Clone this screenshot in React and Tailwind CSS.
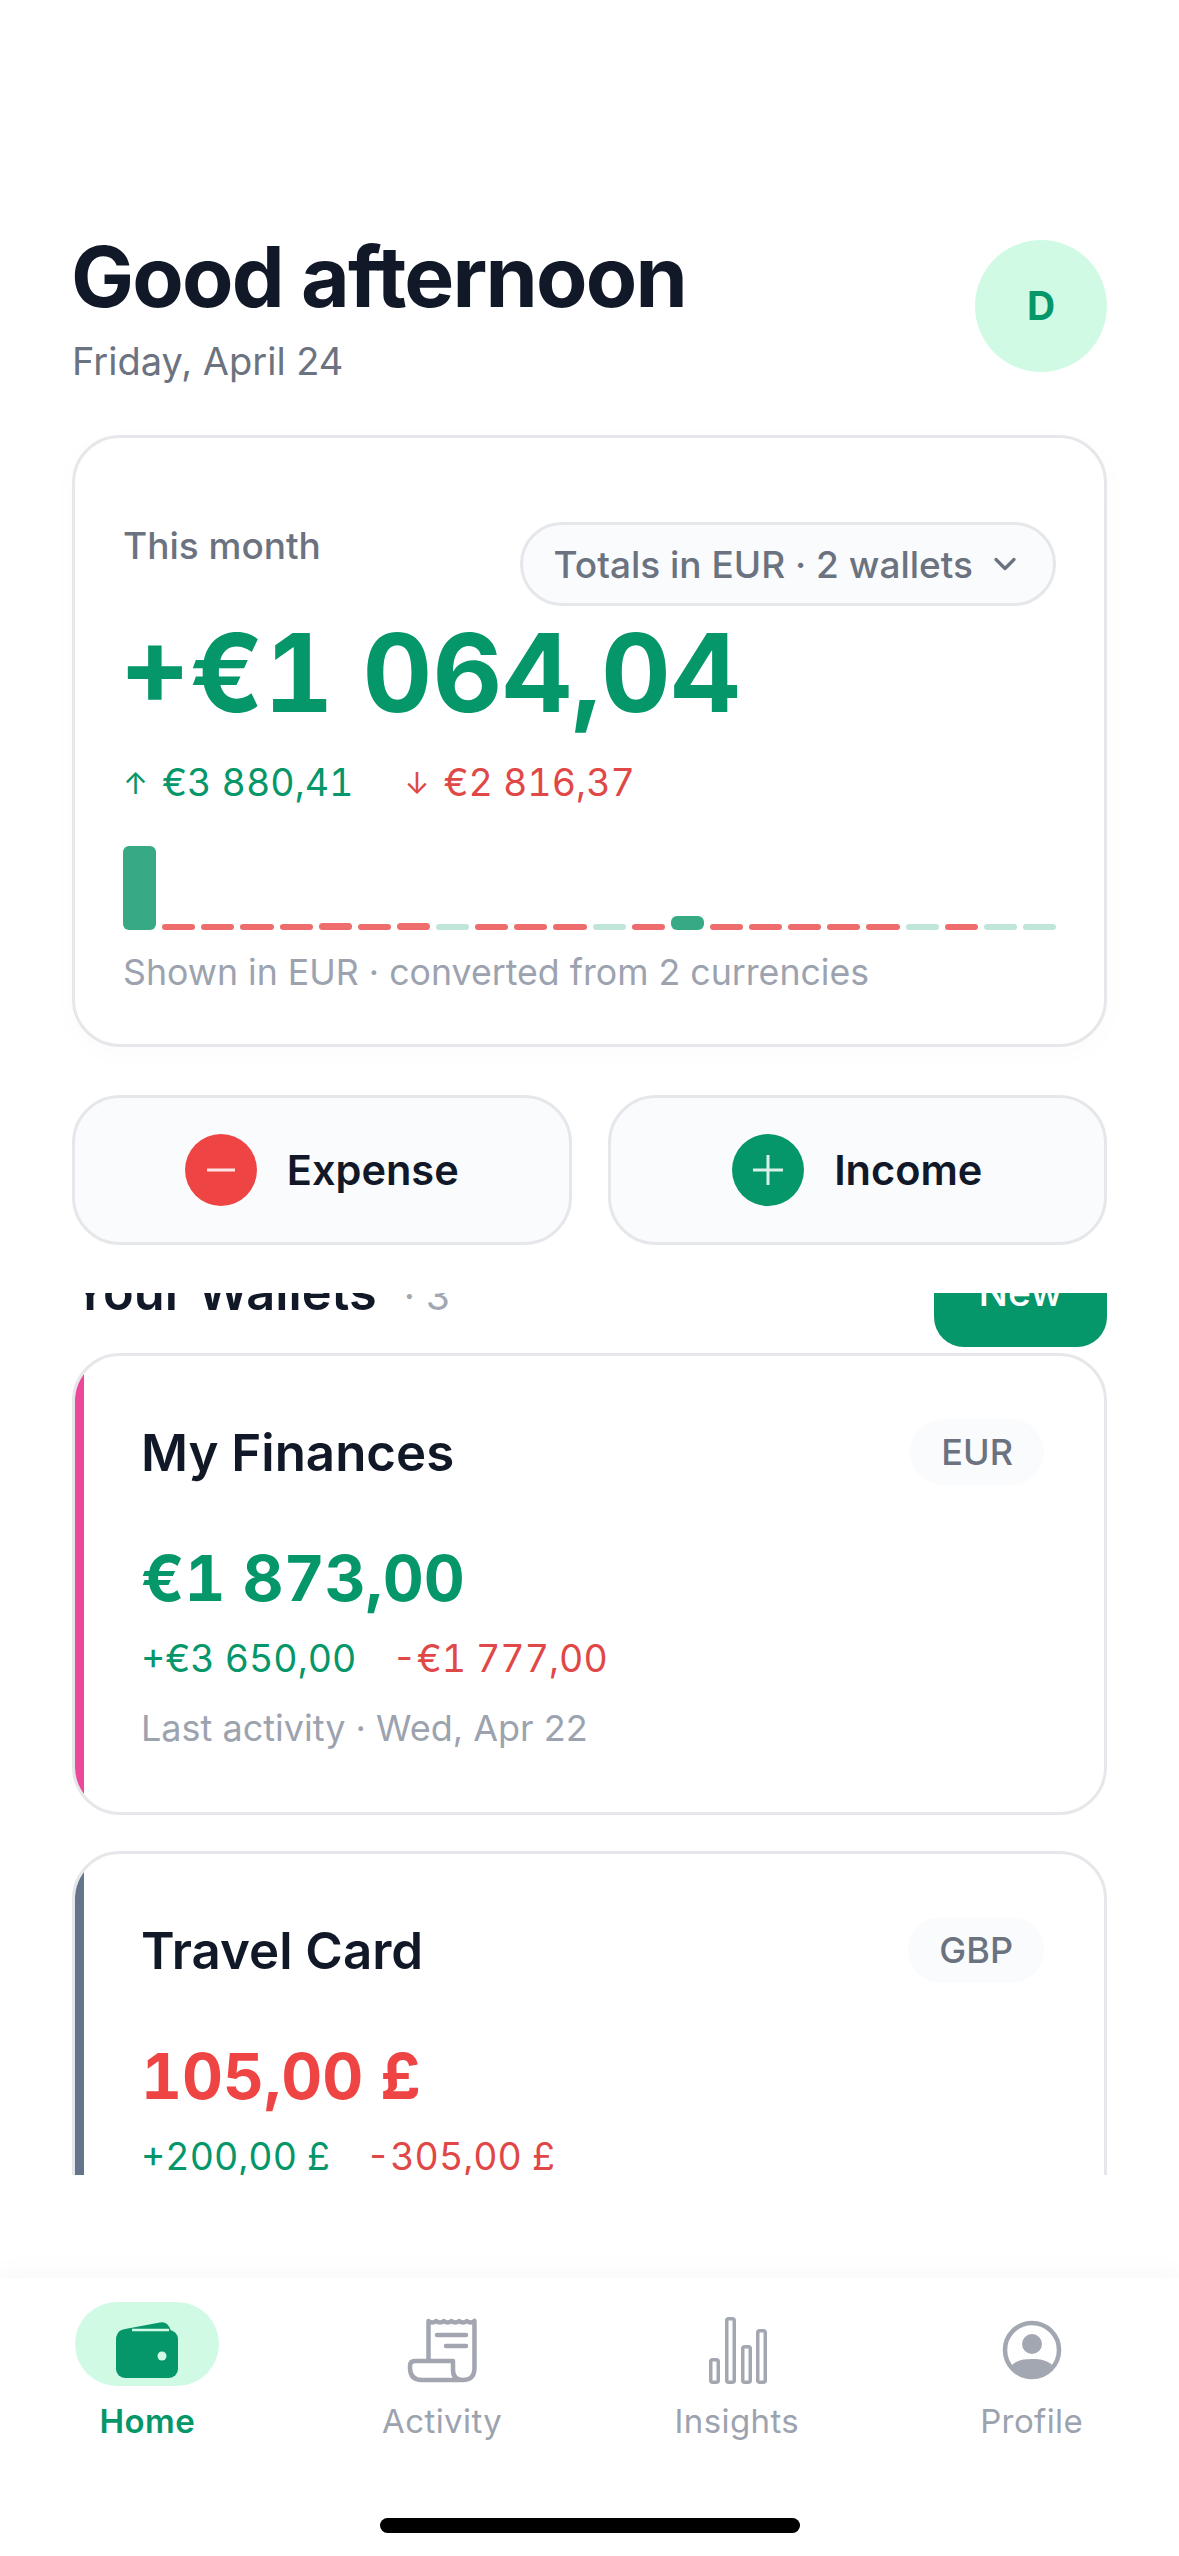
import { ChevronDown } from "lucide-react";

const bars = [
  "h-[84px] bg-[#37a985] rounded-[6px]",
  "h-[6px] bg-[#ee6c6c] rounded-full",
  "h-[6px] bg-[#ee6c6c] rounded-full",
  "h-[6px] bg-[#ee6c6c] rounded-full",
  "h-[6px] bg-[#ee6c6c] rounded-full",
  "h-[7px] bg-[#ee6c6c] rounded-full",
  "h-[6px] bg-[#ee6c6c] rounded-full",
  "h-[7px] bg-[#ee6c6c] rounded-full",
  "h-[6px] bg-[#c0e5d9] rounded-full",
  "h-[6px] bg-[#ee6c6c] rounded-full",
  "h-[6px] bg-[#ee6c6c] rounded-full",
  "h-[6px] bg-[#ee6c6c] rounded-full",
  "h-[6px] bg-[#c0e5d9] rounded-full",
  "h-[6px] bg-[#ee6c6c] rounded-full",
  "h-[14px] bg-[#37a985] rounded-[6px]",
  "h-[6px] bg-[#ee6c6c] rounded-full",
  "h-[6px] bg-[#ee6c6c] rounded-full",
  "h-[6px] bg-[#ee6c6c] rounded-full",
  "h-[6px] bg-[#ee6c6c] rounded-full",
  "h-[6px] bg-[#ee6c6c] rounded-full",
  "h-[6px] bg-[#c0e5d9] rounded-full",
  "h-[6px] bg-[#ee6c6c] rounded-full",
  "h-[6px] bg-[#c0e5d9] rounded-full",
  "h-[6px] bg-[#c0e5d9] rounded-full",
];

const WalletIcon = () => (
  <svg width="95" height="90" viewBox="0 0 95 90">
    <rect x="16" y="25" width="62" height="48" rx="9" fill="#059669" />
    <path d="M17 32 Q17 25 25 24 L60 17.5 Q68 16 71 26 H30 Z" fill="#059669" />
    <path d="M32 25 H69" stroke="#d1fae5" strokeWidth="2.5" />
    <circle cx="62" cy="51" r="4.5" fill="#d1fae5" />
  </svg>
);

const ReceiptIcon = () => (
  <svg width="95" height="90" viewBox="0 0 95 90" fill="none" stroke="#a3a6b1" strokeWidth="4.5" strokeLinecap="round" strokeLinejoin="round">
    <path d="M33.5 54 V16 q3.8 3 7.66 0 q3.8 3 7.66 0 q3.8 3 7.66 0 q3.8 3 7.66 0 q3.8 3 7.66 0 q3.8 3 7.66 0 V64 Q79 75 68 75 Q58 75 58 65 V56 H20 Q15 56 15 61 V63 Q15 75 27 75 H68" />
    <path d="M42 30 H71 M51 41 H71" />
  </svg>
);

const InsightsIcon = () => (
  <svg width="72" height="80" viewBox="0 0 72 80" fill="none" stroke="#a3a7b2" strokeWidth="3.5">
    <rect x="9.75" y="49.75" width="7.5" height="22.5" rx="2" />
    <rect x="25.75" y="8.75" width="7.5" height="63.5" rx="2" />
    <rect x="41.75" y="36.75" width="7.5" height="35.5" rx="2" />
    <rect x="56.75" y="20.75" width="7.5" height="51.5" rx="2" />
  </svg>
);

const ProfileIcon = () => (
  <svg width="72" height="72" viewBox="0 0 72 72">
    <circle cx="36" cy="36" r="27" fill="none" stroke="#a3a7b2" strokeWidth="4.5" />
    <circle cx="36" cy="30" r="10" fill="#a3a7b2" />
    <path d="M16 51 C21 46 28 45 36 45 C44 45 51 46 56 51 C51 59 44 63 36 63 C28 63 21 59 16 51 Z" fill="#a3a7b2" />
  </svg>
);

const tabs = [
  { label: "Home", icon: <WalletIcon />, active: true },
  { label: "Activity", icon: <ReceiptIcon /> },
  { label: "Insights", icon: <InsightsIcon /> },
  { label: "Profile", icon: <ProfileIcon /> },
];

const WalletCard = ({ name, code, stripe, balance, balanceColor, plus, minus, activity }) => (
  <div className="flex h-[462px] shrink-0 overflow-hidden rounded-[48px] border-[3px] border-[#e5e7eb] bg-white">
    <div className={`w-[9px] shrink-0 ${stripe}`} />
    <div className="flex-1 pl-[57px] pr-[60px] pt-[63px]">
      <div className="flex h-[66px] items-center justify-between">
        <span className="text-[51px] font-semibold leading-none text-[#111827]">{name}</span>
        <span className="flex h-[66px] items-center rounded-full bg-[#fafbfc] px-[31px] text-[36px] font-medium leading-none text-[#6b7280]">{code}</span>
      </div>
      <div className={`mt-[51px] text-[63.5px] font-bold leading-[84px] tabular-nums ${balanceColor}`}>{balance}</div>
      <div className="mt-[15px] flex gap-[36px] text-[37.5px] leading-[48px] tabular-nums">
        <span className="text-[#059669]">{plus}</span>
        <span className="text-[#e04848]">{minus}</span>
      </div>
      {activity && <div className="mt-[21px] text-[36px] leading-[48px] text-[#9ca3af]">{activity}</div>}
    </div>
  </div>
);

export default function App() {
  return (
    <div className="flex h-[2556px] w-[1179px] flex-col overflow-hidden bg-white font-['Inter',sans-serif]">
      {/* Greeting */}
      <header className="mt-[240px] flex h-[132px] shrink-0 items-start justify-between px-[72px]">
        <div>
          <h1 className="-ml-[1px] -mt-[1px] text-[84px] font-bold leading-[76px] tracking-[-1.8px] text-[#111827]">Good afternoon</h1>
          <p className="mt-[22px] text-[38px] leading-[48px] text-[#6b7280]">Friday, April 24</p>
        </div>
        <div className="flex h-[132px] w-[132px] items-center justify-center rounded-full bg-[#d1fae5] text-[39px] font-bold text-[#059669]">D</div>
      </header>

      {/* Month summary */}
      <section className="mx-[72px] mt-[63px] h-[612px] shrink-0 rounded-[48px] border-[3px] border-[#e5e7eb] bg-white px-[48px] pt-[84px] shadow-[0_6px_30px_rgba(0,0,0,0.02)]">
        <div className="flex items-start justify-between">
          <span className="text-[37px] font-medium leading-[48px] text-[#6b7280]">This month</span>
          <button className="flex h-[84px] items-center gap-[14px] rounded-full border-[3px] border-[#e5e7eb] bg-[#fafbfc] pl-[31px] pr-[30px] text-[37px] font-medium leading-none text-[#6b7280]">
            Totals in EUR · 2 wallets
            <ChevronDown size={36} strokeWidth={2.2} />
          </button>
        </div>
        <div className="-ml-[3px] mt-[7px] text-[108px] font-bold leading-[120px] tabular-nums text-[#059669]">+€1 064,04</div>
        <div className="mt-[26px] flex gap-[51px] text-[37.6px] leading-[48px] tabular-nums">
          <span className="flex items-center gap-[14px] text-[#059669]">
            <span className="text-[30px]">↑</span>€3 880,41
          </span>
          <span className="flex items-center gap-[14px] text-[#e04848]">
            <span className="text-[30px]">↓</span>€2 816,37
          </span>
        </div>
        <div className="mt-[39px] flex items-end gap-[6px]">
          {bars.map((b, i) => (
            <div key={i} className={`flex-1 ${b}`} />
          ))}
        </div>
        <div className="mt-[18px] text-[35.7px] leading-[48px] text-[#9ca3af]">Shown in EUR · converted from 2 currencies</div>
      </section>

      {/* Quick actions */}
      <div className="mx-[72px] mt-[48px] grid h-[150px] shrink-0 grid-cols-2 gap-[36px]">
        <button className="flex items-center justify-center gap-[30px] rounded-[48px] border-[3px] border-[#e5e7eb] bg-[#fafbfc] text-[41.5px] font-semibold text-[#111827]">
          <span className="flex h-[72px] w-[72px] items-center justify-center rounded-full bg-[#ef4444]">
            <svg width="30" height="30" viewBox="0 0 30 30"><path d="M1 15 H29" stroke="#fff" strokeWidth="3" strokeOpacity="0.85" /></svg>
          </span>
          Expense
        </button>
        <button className="flex items-center justify-center gap-[30px] rounded-[48px] border-[3px] border-[#e5e7eb] bg-[#fafbfc] text-[41.5px] font-semibold text-[#111827]">
          <span className="flex h-[72px] w-[72px] items-center justify-center rounded-full bg-[#059669]">
            <svg width="30" height="30" viewBox="0 0 30 30"><path d="M0 15 H30 M15 0 V30" stroke="#fff" strokeWidth="3" strokeOpacity="0.85" /></svg>
          </span>
          Income
        </button>
      </div>

      {/* Wallet list, scrolled */}
      <div className="mt-[48px] h-[882px] shrink-0 overflow-hidden px-[72px]">
        <div className="-mt-[56px] flex flex-col">
          <div className="flex h-[110px] shrink-0 items-center justify-between">
            <div className="flex items-baseline gap-[27px]">
              <span className="text-[50.5px] font-semibold text-[#111827]">Your Wallets</span>
              <span className="text-[39px] text-[#a3a7b2]">· 3</span>
            </div>
            <button className="flex h-[110px] w-[173px] items-center justify-center rounded-[30px] bg-[#059669] text-[39px] font-medium text-white">New</button>
          </div>
          <div className="mt-[6px] flex flex-col gap-[36px]">
            <WalletCard name="My Finances" code="EUR" stripe="bg-[#ec4899]" balance="€1 873,00" balanceColor="text-[#059669]" plus="+€3 650,00" minus="-€1 777,00" activity="Last activity · Wed, Apr 22" />
            <WalletCard name="Travel Card" code="GBP" stripe="bg-[#64748b]" balance="105,00 £" balanceColor="text-[#ef4444]" plus="+200,00 £" minus="-305,00 £" />
          </div>
        </div>
      </div>

      {/* Tab bar */}
      <nav className="mt-[103px] flex flex-1 flex-col bg-white shadow-[0_-6px_24px_rgba(0,0,0,0.03)]">
        <div className="grid grid-cols-4 pt-[24px]">
          {tabs.map((t) => (
            <div key={t.label} className="flex flex-col items-center">
              <div className={`flex h-[84px] w-[144px] items-center justify-center rounded-full ${t.active ? "bg-[#d1fae5]" : ""}`}>
                <div className="translate-y-[6px]">{t.icon}</div>
              </div>
              <span className={`mt-[15px] text-[33px] leading-[40px] tracking-[0.4px] ${t.active ? "font-semibold text-[#059669]" : "text-[#9ca3af]"}`}>{t.label}</span>
            </div>
          ))}
        </div>
        <div className="mx-auto mt-[77px] h-[15px] w-[420px] rounded-full bg-black" />
      </nav>
    </div>
  );
}
